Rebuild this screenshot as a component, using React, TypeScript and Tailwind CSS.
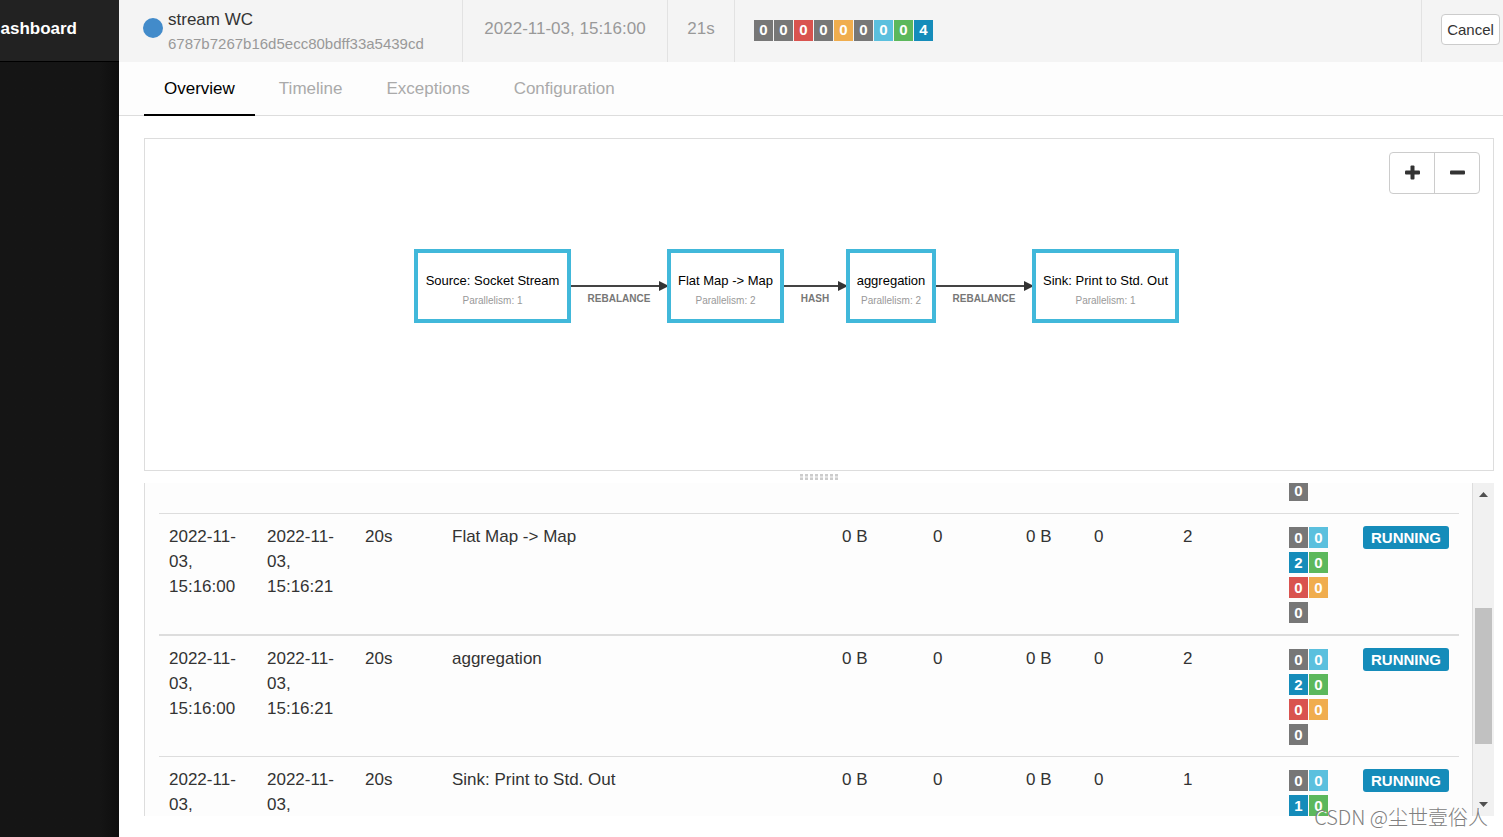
import React from "react";

const gray = "bg-[#777777]";
const red = "bg-[#d9534f]";
const orange = "bg-[#f0ad4e]";
const cyan = "bg-[#5bc0de]";
const green = "bg-[#5cb85c]";
const blue = "bg-[#158cba]";

type Count = { value: number; color: string };

const jobCounts: Count[] = [
  { value: 0, color: gray },
  { value: 0, color: gray },
  { value: 0, color: red },
  { value: 0, color: gray },
  { value: 0, color: orange },
  { value: 0, color: gray },
  { value: 0, color: cyan },
  { value: 0, color: green },
  { value: 4, color: blue },
];

type Row = { start: string; end: string; name: string; parallelism: number; border: string; counts: Count[] };

const taskCounts = (running: number): Count[] => [
  { value: 0, color: gray },
  { value: 0, color: cyan },
  { value: running, color: blue },
  { value: 0, color: green },
  { value: 0, color: red },
  { value: 0, color: orange },
  { value: 0, color: gray },
];

const rows: Row[] = [
  { start: "2022-11-03, 15:16:00", end: "2022-11-03, 15:16:21", name: "Flat Map -> Map", parallelism: 2, border: "[&>td]:border-t", counts: taskCounts(2) },
  { start: "2022-11-03, 15:16:00", end: "2022-11-03, 15:16:21", name: "aggregation", parallelism: 2, border: "[&>td]:border-t-2", counts: taskCounts(2) },
  // The last vertex shows only its first two lines above the panel's bottom edge.
  { start: "2022-11-03,", end: "2022-11-03,", name: "Sink: Print to Std. Out", parallelism: 1, border: "[&>td]:border-t", counts: taskCounts(1).slice(0, 4) },
];

function Badge({ value, color }: Count) {
  return (
    <span className={`flex h-[21px] w-[19px] items-center justify-center pb-px text-[15px] leading-none font-bold text-white ${color}`}>
      {value}
    </span>
  );
}

function Node({ name, parallelism, width }: { name: string; parallelism: number; width: string }) {
  return (
    <div className={`flex h-[74px] shrink-0 flex-col items-center border-4 border-[#41b8da] bg-white pt-[18px] whitespace-nowrap ${width}`}>
      <span className="text-[13px] leading-[20px] text-black">{name}</span>
      <span className="text-[10px] leading-[20px] text-[#999999]">Parallelism: {parallelism}</span>
    </div>
  );
}

function Edge({ label, width }: { label: string; width: string }) {
  return (
    <div className={`flex h-[74px] shrink-0 flex-col items-center pt-8 ${width}`}>
      <div className="flex w-full items-center">
        <div className="h-[2px] flex-1 bg-[#444444]" />
        <svg width="8" height="10" viewBox="0 0 8 10" aria-hidden="true">
          <path d="M0 0 L8 4 L8 6 L0 10 Z" fill="#333333" />
        </svg>
      </div>
      <span className="text-[10px] leading-[15px] font-bold text-[#777777]">{label}</span>
    </div>
  );
}

function Tab({ label, active }: { label: string; active?: boolean }) {
  return (
    <a
      href="#"
      aria-current={active ? "page" : undefined}
      className={`-mb-px flex items-center border-b-2 px-5 ${active ? "border-black text-black" : "border-transparent text-[#aaaaaa]"}`}
    >
      {label}
    </a>
  );
}

export default function App() {
  return (
    <div className="relative flex h-screen overflow-hidden bg-white font-['Liberation_Sans',Arial,sans-serif] text-[17px] leading-[25px] text-[#333333]">
      <aside className="flex w-[119px] shrink-0 flex-col bg-[#151515]">
        <div className="flex h-[62px] items-center justify-end overflow-hidden border-b border-black bg-[#222222] pr-[42px] pb-1 font-bold text-white">
          ashboard
        </div>
        <div className="flex-1 bg-linear-to-l from-[#0e0e0e] to-[#151515] to-[20px]" />
      </aside>

      <div className="flex min-w-0 flex-1 flex-col">
        <header className="flex h-[62px] shrink-0 bg-[#f4f4f4] text-[#999999]">
          <div className="flex w-[344px] items-center gap-[5px] border-r border-[#e2e2e2] pl-6">
            <span className="mb-[6px] size-5 rounded-full bg-[#428bca]" />
            <div className="flex flex-col pt-0.5">
              <h1 className="leading-[24px] text-[#333333]">stream WC</h1>
              <span className="text-[15px] leading-[24px]">6787b7267b16d5ecc80bdff33a5439cd</span>
            </div>
          </div>
          <div className="flex w-[205px] items-center justify-center border-r border-[#e2e2e2] pb-[6px]">2022-11-03, 15:16:00</div>
          <div className="flex w-[67px] items-center justify-center border-r border-[#e2e2e2] pb-[6px]">21s</div>
          <div className="flex flex-1 items-center gap-px pb-0.5 pl-[19px]">
            {jobCounts.map((c, i) => (
              <Badge key={i} {...c} />
            ))}
          </div>
          <div className="flex items-center border-l border-[#e2e2e2] pr-[3px] pb-[3px] pl-[19px]">
            <button type="button" className="h-[31px] w-[59px] rounded-[4px] border border-[#cccccc] bg-white text-[15px] leading-none text-[#333333]">
              Cancel
            </button>
          </div>
        </header>

        <nav className="flex h-[54px] shrink-0 gap-1 border-b border-[#dddddd] bg-[#fdfdfd] pl-[25px]">
          <Tab label="Overview" active />
          <Tab label="Timeline" />
          <Tab label="Exceptions" />
          <Tab label="Configuration" />
        </nav>

        <main className="grid min-h-0 flex-1 grid-rows-[minmax(0,1fr)_12px_minmax(0,1fr)] pt-[22px] pr-[9px] pb-[21px] pl-[25px]">
          <section className="relative overflow-hidden border border-[#dddddd] bg-white">
            <div className="absolute top-[13px] right-[13px] flex h-[42px] w-[91px] rounded-[4px] border border-[#cccccc] bg-white">
              <button type="button" aria-label="Zoom in" className="flex flex-1 items-center justify-center border-r border-[#cccccc] pb-0.5">
                <svg width="15" height="15" viewBox="0 0 15 15" fill="#333333" aria-hidden="true">
                  <rect x="0" y="5.5" width="15" height="4" rx="1" />
                  <rect x="5.5" y="0.5" width="4" height="14" rx="1" />
                </svg>
              </button>
              <button type="button" aria-label="Zoom out" className="flex flex-1 items-center justify-center pb-0.5">
                <svg width="15" height="15" viewBox="0 0 15 15" fill="#333333" aria-hidden="true">
                  <rect x="0" y="5.5" width="15" height="4" rx="1" />
                </svg>
              </button>
            </div>
            <div className="flex pt-[110px] pl-[269px]">
              <Node name="Source: Socket Stream" parallelism={1} width="w-[157px]" />
              <Edge label="REBALANCE" width="w-[96px]" />
              <Node name="Flat Map -> Map" parallelism={2} width="w-[117px]" />
              <Edge label="HASH" width="w-[62px]" />
              <Node name="aggregation" parallelism={2} width="w-[90px]" />
              <Edge label="REBALANCE" width="w-[96px]" />
              <Node name="Sink: Print to Std. Out" parallelism={1} width="w-[147px]" />
            </div>
          </section>

          <div className="flex items-center justify-center">
            <svg width="38" height="6" viewBox="0 0 38 6" aria-hidden="true">
              {[0, 5, 10, 15, 20, 25, 30, 35].map((x) => (
                <g key={x}>
                  <rect x={x} y="0" width="3" height="6" fill="#e2e2e2" />
                  <rect x={x} y="0" width="3" height="2" fill="#cccccc" />
                  <rect x={x} y="4" width="3" height="2" fill="#cccccc" />
                </g>
              ))}
            </svg>
          </div>

          <section className="flex overflow-hidden border-l border-[#dddddd] bg-[#fdfdfd]">
            <div className="min-w-0 flex-1 overflow-hidden pr-[13px] pl-[14px]">
              <table className="mt-[-3px] w-full table-fixed border-separate border-spacing-0 text-left">
                <colgroup>
                  <col className="w-[98px]" />
                  <col className="w-[98px]" />
                  <col className="w-[87px]" />
                  <col />
                  <col className="w-[91px]" />
                  <col className="w-[93px]" />
                  <col className="w-[68px]" />
                  <col className="w-[89px]" />
                  <col className="w-[106px]" />
                  <col className="w-[74px]" />
                  <col className="w-[106px]" />
                </colgroup>
                <tbody>
                  <tr className="align-top">
                    <td colSpan={9} />
                    <td className="pb-3 pl-[10px]">
                      <Badge value={0} color={gray} />
                    </td>
                    <td />
                  </tr>
                </tbody>
                {rows.map((r) => (
                  <tbody key={r.name}>
                    <tr className={`align-top [&>td]:border-[#dddddd] [&>td]:py-[10px] [&>td]:pl-[10px] ${r.border}`}>
                      <td className="pr-[10px]">{r.start}</td>
                      <td className="pr-[10px]">{r.end}</td>
                      <td>20s</td>
                      <td>{r.name}</td>
                      <td>0 B</td>
                      <td>0</td>
                      <td>0 B</td>
                      <td>0</td>
                      <td>{r.parallelism}</td>
                      <td>
                        <div className="flex w-[39px] flex-wrap gap-x-px gap-y-1 pt-[3px] pb-px">
                          {r.counts.map((c, i) => (
                            <Badge key={i} {...c} />
                          ))}
                        </div>
                      </td>
                      <td>
                        <span className="mt-0.5 flex h-[23px] w-[86px] items-center justify-center rounded-[3px] bg-[#158cba] text-[15px] leading-none font-bold text-white">
                          RUNNING
                        </span>
                      </td>
                    </tr>
                  </tbody>
                ))}
              </table>
            </div>
            <div className="flex w-[22px] shrink-0 flex-col items-center border-l border-[#dddddd] bg-[#f1f1f1] py-[9px]" aria-hidden="true">
              <svg width="9" height="5" viewBox="0 0 9 5">
                <path d="M0 5 L4.5 0 L9 5 Z" fill="#505050" />
              </svg>
              <div className="flex w-full flex-1 flex-col items-center">
                <div className="flex-[111]" />
                <div className="w-[17px] flex-[136] bg-[#c1c1c1]" />
                <div className="flex-[58]" />
              </div>
              <svg width="9" height="5" viewBox="0 0 9 5">
                <path d="M0 0 L4.5 5 L9 0 Z" fill="#505050" />
              </svg>
            </div>
          </section>
        </main>
      </div>

      <div className="absolute right-[15px] bottom-[5px] font-['Noto_Sans_CJK_SC',sans-serif] text-[20px] leading-[30px] font-light whitespace-nowrap text-[#808080] [text-shadow:1px_1px_0_#ffffff]">
        CSDN @尘世壹俗人
      </div>
    </div>
  );
}
